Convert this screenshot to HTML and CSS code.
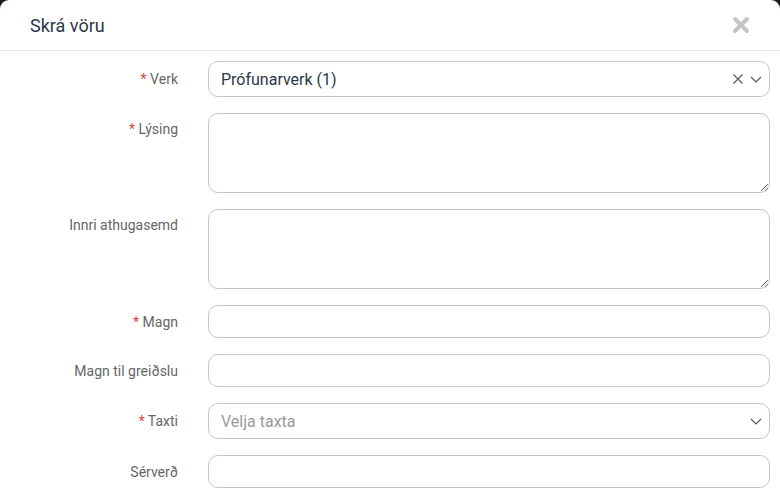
FILE: index.html
```html
<!DOCTYPE html>
<html lang="is">
<head>
    <meta charset="UTF-8">
    <meta name="viewport" content="width=device-width, initial-scale=1.0">
    <title>Skrá vöru</title>
    <link rel="stylesheet" href="styles.css">
</head>
<body>
    <div class="modal">
        <div class="modal-header">
            <h2 class="modal-title">Skrá vöru</h2>
            <button class="close-btn" aria-label="Loka">
                <svg width="18" height="18" viewBox="0 0 18 18">
                    <path d="M3 3 L15 15 M15 3 L3 15" stroke="#c4c4c4" stroke-width="4" stroke-linecap="round"/>
                </svg>
            </button>
        </div>

        <form class="modal-body">
            <!-- Verk -->
            <div class="form-row">
                <label class="form-label"><span class="req">*</span> Verk</label>
                <div class="select-box">
                    <span class="select-value">Prófunarverk (1)</span>
                    <span class="select-icons">
                        <svg width="12" height="12" viewBox="0 0 12 12"><path d="M1.5 1.5 L10.5 10.5 M10.5 1.5 L1.5 10.5" stroke="#555" stroke-width="1.1"/></svg>
                        <svg width="12" height="12" viewBox="0 0 12 12"><path d="M1 4 L6 9 L11 4" stroke="#555" stroke-width="1.1" fill="none"/></svg>
                    </span>
                </div>
            </div>

            <!-- Lýsing -->
            <div class="form-row">
                <label class="form-label top"><span class="req">*</span> Lýsing</label>
                <textarea class="form-input textarea"></textarea>
            </div>

            <!-- Innri athugasemd -->
            <div class="form-row">
                <label class="form-label top">Innri athugasemd</label>
                <textarea class="form-input textarea"></textarea>
            </div>

            <div class="form-row">
                <label class="form-label"><span class="req">*</span> Magn</label>
                <input class="form-input" type="text">
            </div>

            <div class="form-row">
                <label class="form-label">Magn til greiðslu</label>
                <input class="form-input" type="text">
            </div>

            <div class="form-row">
                <label class="form-label"><span class="req">*</span> Taxti</label>
                <div class="select-box">
                    <span class="select-placeholder">Velja taxta</span>
                    <span class="select-icons">
                        <svg width="12" height="12" viewBox="0 0 12 12"><path d="M1 4 L6 9 L11 4" stroke="#555" stroke-width="1.1" fill="none"/></svg>
                    </span>
                </div>
            </div>

            <div class="form-row">
                <label class="form-label">Sérverð</label>
                <input class="form-input" type="text">
            </div>
        </form>
    </div>
</body>
</html>
```

FILE: styles.css
```css
body {
    margin: 0;
    background-color: #1c1c1c;
    font-family: Roboto, "Liberation Sans", sans-serif;
    height: 493px;
    overflow: hidden;
}

.modal {
    background-color: #ffffff;
    border-radius: 9px 9px 0 0;
    min-height: 493px;
}

.modal-header {
    display: flex;
    align-items: center;
    justify-content: space-between;
    height: 50px;
    padding: 0 30px;
    border-bottom: 1px solid #e6e6e6;
}

.modal-title {
    margin: 0;
    font-size: 18px;
    font-weight: 400;
    color: #2d3748;
}

.close-btn {
    border: none;
    background: none;
    padding: 0;
    display: flex;
    cursor: pointer;
}

.modal-body {
    padding: 10px 10px 0 0;
    display: flex;
    flex-direction: column;
    gap: 16px;
}

.form-row {
    display: grid;
    grid-template-columns: 178px 1fr;
    column-gap: 30px;
    align-items: center;
}

.form-label {
    text-align: right;
    font-size: 14px;
    color: #666666;
}

.form-label.top {
    align-self: start;
    padding-top: 8px;
}

.req {
    color: #e53e3e;
}

.form-input {
    box-sizing: border-box;
    height: 33px;
    width: 100%;
    border: 1px solid #c8c6c0;
    border-radius: 10px;
    font-family: inherit;
    font-size: 16px;
    padding: 0 12px;
    margin: 0;
    outline: none;
}

.textarea {
    height: 80px;
    resize: vertical;
    display: block;
}

.select-box {
    box-sizing: border-box;
    height: 36px;
    display: flex;
    align-items: center;
    justify-content: space-between;
    border: 1px solid #c8c6c0;
    border-radius: 10px;
    padding: 0 7px 0 12px;
    font-size: 16px;
}

.select-value {
    color: #2d3748;
}

.select-placeholder {
    color: #9a9a9a;
}

.select-icons {
    display: flex;
    align-items: center;
    gap: 6px;
}
```
